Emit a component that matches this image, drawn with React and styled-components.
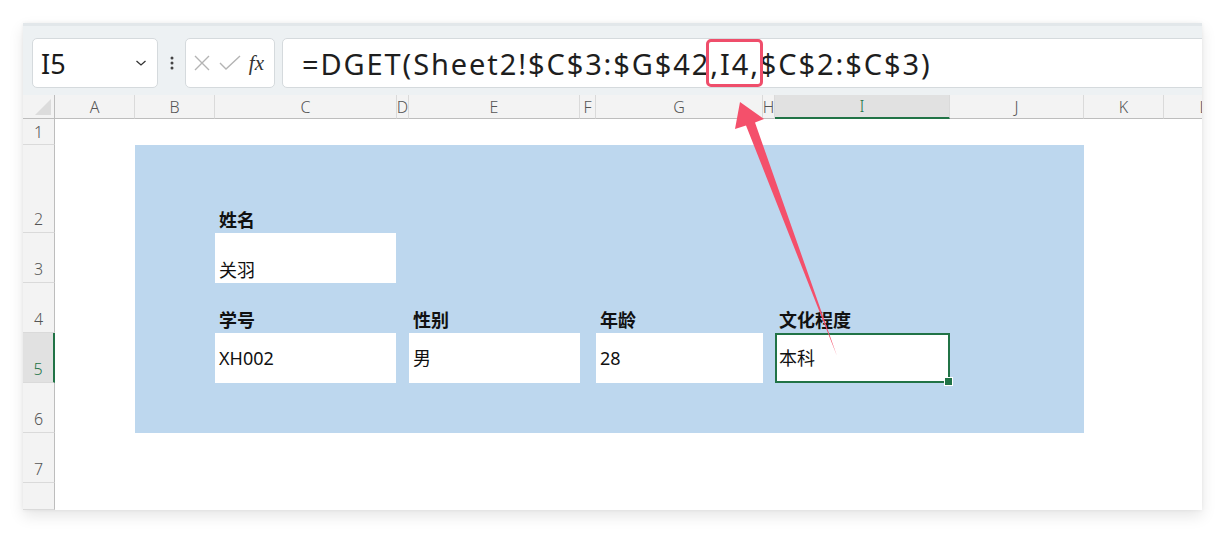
import React from "react";
import styled, { createGlobalStyle } from "styled-components";

const GlobalStyle = createGlobalStyle`
  html, body { margin: 0; padding: 0; background: #fff; }
  body { font-family: "Noto Sans", "Noto Sans CJK SC", sans-serif; }
  * { box-sizing: border-box; }
`;

const Page = styled.div`
  position: relative;
  width: 1225px;
  height: 534px;
  padding: 23px 0 0 23px;
  overflow: hidden;
`;

const Window = styled.div`
  width: 1179px;
  height: 487px;
  background: #fff;
  display: flex;
  flex-direction: column;
  overflow: hidden;
  box-shadow: 0 6px 14px rgba(0, 0, 0, 0.1), 0 0 4px rgba(0, 0, 0, 0.06);
`;

const Toolbar = styled.div`
  height: 72px;
  flex: none;
  display: flex;
  align-items: stretch;
  padding: 12px 0 7px 9px;
  background: #edf1f3;
  border-top: 3px solid #e2e7ea;
`;

const Box = styled.div`
  background: #fff;
  border: 1px solid #d5dadd;
  border-radius: 5px;
  display: flex;
  align-items: center;
`;

const NameBox = styled(Box)`
  width: 126px;
  padding: 0 10px 0 8px;
  justify-content: space-between;
  font-size: 27px;
  color: #1a1a1a;
`;

const Dots = styled.div`
  width: 27px;
  display: flex;
  align-items: center;
  justify-content: center;
`;

const ActionBox = styled(Box)`
  width: 90px;
  padding: 0 8px 0 7px;
  justify-content: space-between;
`;

const Fx = styled.span`
  font-family: "Liberation Serif", serif;
  font-style: italic;
  font-size: 21px;
  color: #333;
  margin-right: 2px;
`;

const FormulaBox = styled(Box)`
  flex: 1;
  margin-left: 7px;
  margin-right: -20px;
  padding-left: 19px;
  font-size: 29px;
  letter-spacing: 1.9px;
  color: #1e1e1e;
  white-space: nowrap;
`;

const Marked = styled.span`
  position: relative;
  &::after {
    content: "";
    position: absolute;
    left: -4px;
    right: -3px;
    top: -5px;
    bottom: -4px;
    border: 3px solid #ef4e6b;
    border-radius: 5px;
  }
`;

const Sheet = styled.div`
  flex: 1;
  display: grid;
  grid-template-columns: 32px 80px 80px 182px 12px 171px 16px 167px 12px 175px 134px 80px 80px;
  grid-template-rows: 24px 26px 88px 50px 50px 50px 50px 50px 1fr;
  overflow: hidden;
`;

const Corner = styled.div`
  grid-column: 1;
  grid-row: 1;
  background: #f3f3f3;
  border-right: 1px solid #bdbdbd;
  border-bottom: 1px solid #bdbdbd;
  position: relative;
  &::after {
    content: "";
    position: absolute;
    right: 3px;
    bottom: 3px;
    border-left: 16px solid transparent;
    border-bottom: 16px solid #dcdcdc;
  }
`;

const ColHeader = styled.div`
  grid-row: 1;
  grid-column: ${(p) => p.$col};
  background: ${(p) => (p.$active ? "#e1e1e1" : "#f3f3f3")};
  border-bottom: ${(p) => (p.$active ? "2px solid #217346" : "1px solid #bdbdbd")};
  border-right: 1px solid #dadada;
  display: flex;
  align-items: center;
  justify-content: center;
  font-size: 16px;
  font-weight: 300;
  color: ${(p) => (p.$active ? "#217346" : "#555")};
  white-space: nowrap;
`;

const RowHeader = styled.div`
  grid-column: 1;
  grid-row: ${(p) => p.$row};
  background: ${(p) => (p.$active ? "#e1e1e1" : "#f3f3f3")};
  border-right: ${(p) => (p.$active ? "2px solid #217346" : "1px solid #bdbdbd")};
  border-bottom: 1px solid #dadada;
  display: flex;
  justify-content: center;
  align-items: ${(p) => (p.$center ? "center" : "flex-end")};
  padding-bottom: ${(p) => (p.$center ? "0" : "2px")};
  font-size: 16px;
  font-weight: 300;
  color: ${(p) => (p.$active ? "#217346" : "#555")};
`;

const Band = styled.div`
  grid-column: 3 / 12;
  grid-row: 3 / 8;
  background: #bdd7ee;
`;

const Cell = styled.div`
  grid-column: ${(p) => p.$col};
  grid-row: ${(p) => p.$row};
  position: relative;
  display: flex;
  align-items: ${(p) => (p.$middle ? "center" : "flex-end")};
  padding: 0 4px 1px 4px;
  margin-right: ${(p) => (p.$col === 4 ? "1px" : "0")};
  font-size: 18px;
  line-height: 24px;
  font-weight: ${(p) => (p.$bold ? 700 : 400)};
  color: #111;
  background: ${(p) => (p.$white ? "#fff" : "transparent")};
  border: ${(p) => (p.$selected ? "2px solid #217346" : "none")};
  padding-left: ${(p) => (p.$selected ? "2px" : "4px")};
  white-space: nowrap;
  ${(p) =>
    p.$selected &&
    `
    &::after {
      content: "";
      position: absolute;
      right: -5px;
      bottom: -5px;
      width: 7px;
      height: 7px;
      background: #217346;
      border: 1px solid #fff;
    }
  `}
`;

const Overlay = styled.svg`
  position: absolute;
  left: 0;
  top: 0;
  pointer-events: none;
`;

const columns = [
  ["A", 2],
  ["B", 3],
  ["C", 4],
  ["D", 5],
  ["E", 6],
  ["F", 7],
  ["G", 8],
  ["H", 9],
  ["I", 10],
  ["J", 11],
  ["K", 12],
  ["L", 13],
];

const cells = [
  { col: 4, row: 3, text: "姓名", bold: true },
  { col: 4, row: 4, text: "关羽", white: true },
  { col: 4, row: 5, text: "学号", bold: true },
  { col: 6, row: 5, text: "性别", bold: true },
  { col: 8, row: 5, text: "年龄", bold: true },
  { col: 10, row: 5, text: "文化程度", bold: true },
  { col: 4, row: 6, text: "XH002", white: true, middle: true },
  { col: 6, row: 6, text: "男", white: true, middle: true },
  { col: 8, row: 6, text: "28", white: true, middle: true },
  { col: 10, row: 6, text: "本科", white: true, middle: true, selected: true },
];

export default function App() {
  return (
    <>
      <GlobalStyle />
      <Page>
        <Window>
          <Toolbar>
            <NameBox>
              <span>I5</span>
              <svg width="12" height="8" viewBox="0 0 12 8">
                <polyline points="1.5,2 6,6 10.5,2" fill="none" stroke="#333" strokeWidth="1.3" />
              </svg>
            </NameBox>
            <Dots>
              <svg width="4" height="14" viewBox="0 0 4 14">
                <circle cx="2" cy="2" r="1.5" fill="#444" />
                <circle cx="2" cy="7" r="1.5" fill="#444" />
                <circle cx="2" cy="12" r="1.5" fill="#444" />
              </svg>
            </Dots>
            <ActionBox>
              <svg width="18" height="18" viewBox="0 0 18 18">
                <path d="M2 2 L16 16 M16 2 L2 16" stroke="#b4b4b4" strokeWidth="1.4" fill="none" />
              </svg>
              <svg width="22" height="18" viewBox="0 0 22 18">
                <polyline points="1,9 7,15 21,2" stroke="#b4b4b4" strokeWidth="1.4" fill="none" />
              </svg>
              <Fx>fx</Fx>
            </ActionBox>
            <FormulaBox>
              =DGET(Sheet2!$C$3:$G$42<Marked>,I4,</Marked>$C$2:$C$3)
            </FormulaBox>
          </Toolbar>
          <Sheet>
            <Corner />
            {columns.map(([name, col]) => (
              <ColHeader key={name} $col={col} $active={name === "I"}>
                {name}
              </ColHeader>
            ))}
            {[1, 2, 3, 4, 5, 6, 7, 8].map((n) => (
              <RowHeader key={n} $row={n + 1} $center={n === 1} $active={n === 5}>
                {n < 8 ? n : ""}
              </RowHeader>
            ))}
            <Band />
            {cells.map((c) => (
              <Cell
                key={c.col + "-" + c.row}
                $col={c.col}
                $row={c.row}
                $bold={c.bold}
                $white={c.white}
                $middle={c.middle}
                $selected={c.selected}
              >
                {c.text}
              </Cell>
            ))}
          </Sheet>
        </Window>
        <Overlay width="1225" height="534" viewBox="0 0 1225 534">
          <polygon
            points="740,102 764,119 755,122.5 837,356 746,125.5 735,129"
            fill="#f4506b"
          />
        </Overlay>
      </Page>
    </>
  );
}
